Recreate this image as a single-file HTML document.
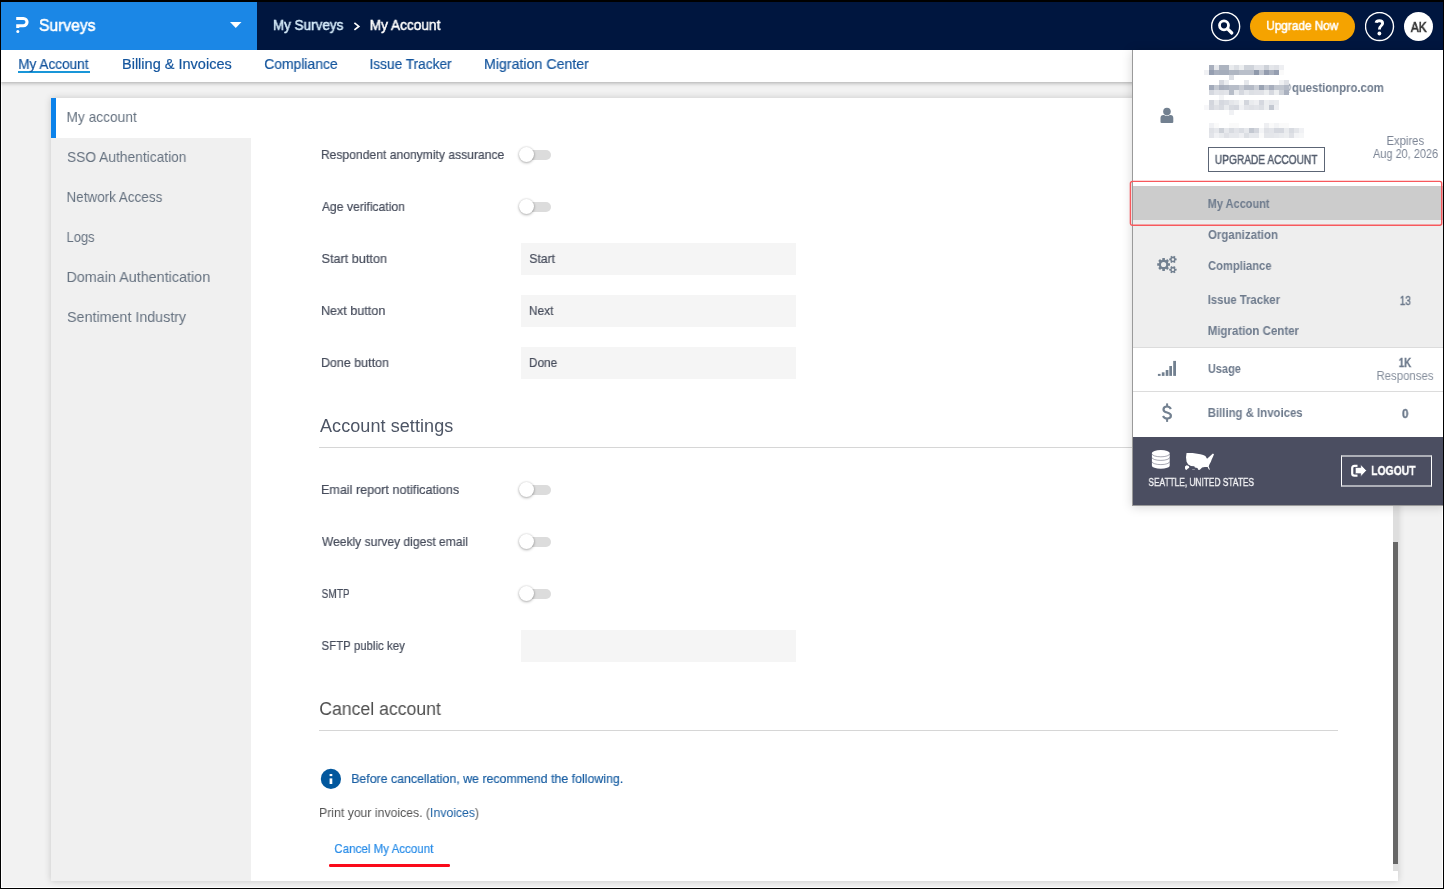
<!DOCTYPE html>
<html>
<head>
<meta charset="utf-8">
<title>My Account</title>
<style>
*{box-sizing:border-box;margin:0;padding:0}
html,body{width:1444px;height:889px;overflow:hidden;background:#f2f2f2}
body{font-family:"Liberation Sans",sans-serif;position:relative}
div,svg{position:absolute}
.t{position:absolute;white-space:nowrap;line-height:1;display:block;will-change:transform}
#card{left:51px;top:98px;width:1347px;height:783px;background:#fff;box-shadow:0 0 7px rgba(0,0,0,.18)}
#side{left:51px;top:138px;width:200px;height:743px;background:#f0f0f0}
#sideAct{left:51px;top:98px;width:5px;height:40px;background:#0b82ea}
.inp{left:521px;width:275px;height:32px;background:#f5f5f5}
.tog{left:518px;width:34px;height:16px}
.tog i{position:absolute;left:3px;top:3px;width:30px;height:10px;border-radius:5px;background:#dcdcdc}
.tog b{position:absolute;left:1px;top:0;width:15px;height:15px;border-radius:50%;background:#fff;box-shadow:0 0 2px rgba(0,0,0,.14),0 1px 3px rgba(0,0,0,.3)}
.hr{left:319px;width:1019px;height:1px;background:#d6d6d6}
#subnav{left:0;top:50px;width:1444px;height:32px;background:#fff;box-shadow:0 1px 4px rgba(0,0,0,.3)}
#hdr{left:0;top:0;width:1444px;height:50px;background:#00163f}
#hdrBlue{left:0;top:0;width:257px;height:50px;background:#1b87e6}
#dd{left:1132px;top:50px;width:313px;height:456px;background:#fff;border:1px solid #9a9a9a;border-top:0;box-shadow:0 1px 10px rgba(0,0,0,.17)}
.fr{background:#000;z-index:9}
</style>
</head>
<body>
<!-- inner white edge of screenshot frame -->
<div style="left:1px;top:50px;width:1px;height:838px;background:#fff"></div>
<div style="left:1442px;top:50px;width:1px;height:838px;background:#fff"></div>
<div style="left:1px;top:887px;width:1442px;height:1px;background:#fff"></div>
<!-- card -->
<div id="card"></div>
<div id="side"></div>
<div id="sideAct"></div>
<!-- form controls -->
<div class="tog" style="top:147px"><i></i><b></b></div>
<div class="tog" style="top:199px"><i></i><b></b></div>
<div class="inp" style="top:243px"></div>
<div class="inp" style="top:295px"></div>
<div class="inp" style="top:347px"></div>
<div class="hr" style="top:447px"></div>
<div class="tog" style="top:482px"><i></i><b></b></div>
<div class="tog" style="top:534px"><i></i><b></b></div>
<div class="tog" style="top:586px"><i></i><b></b></div>
<div class="inp" style="top:630px"></div>
<div class="hr" style="top:730px"></div>
<svg style="left:320px;top:768px" width="22" height="22" viewBox="0 0 22 22"><circle cx="10.9" cy="10.9" r="10.1" fill="#02579d"/><rect x="9.6" y="10.4" width="2.7" height="5.6" fill="#fff"/><rect x="9.6" y="6" width="2.7" height="2.1" fill="#fff"/></svg>
<div style="left:329px;top:864px;width:120.5px;height:2.6px;background:#fa0a1a;border-radius:1.3px"></div>
<!-- scrollbar -->
<div style="left:1393px;top:505px;width:5px;height:366px;background:#dedede"></div>
<div style="left:1393px;top:542px;width:5px;height:322px;background:#666"></div>
<!-- subnav + header -->
<div id="subnav"></div>
<div style="left:18px;top:71px;width:72px;height:2px;background:#1996d8"></div>
<div id="hdr"><div id="hdrBlue"></div></div>
<svg style="left:15px;top:16px" width="15" height="18" viewBox="0 0 15 18"><path d="M1.2 2.45 H8.4 A3.65 3.65 0 0 1 8.4 9.75 H2.75 V12.1" fill="none" stroke="#fff" stroke-width="3.1"/><circle cx="2.8" cy="15.5" r="1.5" fill="#fff"/></svg>
<svg style="left:230px;top:22px" width="12" height="6" viewBox="0 0 12 6"><path d="M0 0H11.5L5.75 6Z" fill="#fff"/></svg>
<svg style="left:353px;top:22px" width="8" height="9" viewBox="0 0 8 9"><path d="M1.4 0.9 L5.8 4.4 L1.4 7.9" fill="none" stroke="#fff" stroke-width="1.7"/></svg>
<svg style="left:1211px;top:12px" width="30" height="30" viewBox="0 0 30 30"><circle cx="14.65" cy="14.5" r="14" fill="none" stroke="#fff" stroke-width="1.4"/><circle cx="13" cy="13.3" r="4.5" fill="none" stroke="#fff" stroke-width="2.8"/><path d="M16.6 16.9 L20.8 21" stroke="#fff" stroke-width="3.2" stroke-linecap="round"/></svg>
<div style="left:1250px;top:12px;width:105px;height:29px;border-radius:14.5px;background:#f5a300"></div>
<svg style="left:1365px;top:12px" width="30" height="30" viewBox="0 0 30 30"><circle cx="14.5" cy="14.5" r="14" fill="none" stroke="#fff" stroke-width="1.4"/><path d="M11.1 10.8 Q11.5 8.7 14.4 8.7 Q17.6 8.7 17.6 11.3 Q17.6 13 15.9 14.1 Q14.4 15.1 14.4 17.5" fill="none" stroke="#fff" stroke-width="2.9"/><circle cx="14.4" cy="21.5" r="1.9" fill="#fff"/></svg>
<div style="left:1404px;top:12px;width:29px;height:29px;border-radius:50%;background:#fff"></div>
<!-- dropdown -->
<div id="dd"></div>
<div style="left:1133px;top:219px;width:311px;height:128px;background:#eee"></div>
<div style="left:1133px;top:186px;width:311px;height:33.5px;background:#ccc"></div>
<div style="left:1133px;top:347px;width:311px;height:1px;background:#dcdcdc"></div>
<div style="left:1133px;top:391px;width:311px;height:1px;background:#dcdcdc"></div>
<div style="left:1133px;top:437px;width:311px;height:68px;background:#4b4e61"></div>
<div style="left:1208px;top:147px;width:117px;height:25px;border:1px solid #5c6575"></div>
<div style="left:1341px;top:455px;width:91px;height:32px;border:1px solid #fff;border-top:2px solid rgba(255,255,255,.55);border-bottom:2px solid rgba(255,255,255,.55)"></div>
<span class="t" style="left:39px;top:17px;padding-left:0.04px;font-size:16.5px;color:#fff;-webkit-text-stroke:0.55px #fff;transform-origin:0 0;transform:scaleX(0.9450);">Surveys</span>
<span class="t" style="left:272px;top:18px;padding-left:1.02px;font-size:14.5px;color:#d4ebfa;-webkit-text-stroke:0.5px #d4ebfa;transform-origin:0 0;transform:scaleX(0.9292);">My Surveys</span>
<span class="t" style="left:369px;top:18px;padding-left:0.72px;font-size:14.5px;color:#fff;-webkit-text-stroke:0.5px #fff;transform-origin:0 0;transform:scaleX(0.9429);">My Account</span>
<span class="t" style="left:1266px;top:19px;padding-left:0.26px;font-size:13px;color:#fff;-webkit-text-stroke:0.55px #fff;transform-origin:0 0;transform:scaleX(0.9070);">Upgrade Now</span>
<span class="t" style="left:1410px;top:20px;padding-left:1.00px;font-size:14px;color:#333;-webkit-text-stroke:0.7px #333;transform-origin:0 0;transform:scaleX(0.8502);">AK</span>
<span class="t" style="left:18px;top:57px;padding-left:0.25px;font-size:14.5px;color:#14559d;-webkit-text-stroke:0.2px #14559d;transform-origin:0 0;transform:scaleX(0.9375);">My Account</span>
<span class="t" style="left:121px;top:57px;padding-left:0.97px;font-size:14.5px;color:#14559d;-webkit-text-stroke:0.2px #14559d;letter-spacing:0.011px;">Billing &amp; Invoices</span>
<span class="t" style="left:264px;top:57px;padding-left:0.21px;font-size:14.5px;color:#14559d;-webkit-text-stroke:0.2px #14559d;transform-origin:0 0;transform:scaleX(0.9589);">Compliance</span>
<span class="t" style="left:369px;top:57px;padding-left:0.56px;font-size:14.5px;color:#14559d;-webkit-text-stroke:0.2px #14559d;transform-origin:0 0;transform:scaleX(0.9432);">Issue Tracker</span>
<span class="t" style="left:483px;top:57px;padding-left:1.01px;font-size:14.5px;color:#14559d;-webkit-text-stroke:0.2px #14559d;transform-origin:0 0;transform:scaleX(0.9785);">Migration Center</span>
<span class="t" style="left:66px;top:109px;padding-left:0.47px;font-size:15px;color:#667280;transform-origin:0 0;transform:scaleX(0.9163);">My account</span>
<span class="t" style="left:67px;top:149px;padding-left:0.08px;font-size:15px;color:#667280;transform-origin:0 0;transform:scaleX(0.9174);">SSO Authentication</span>
<span class="t" style="left:66px;top:189px;padding-left:0.50px;font-size:15px;color:#667280;transform-origin:0 0;transform:scaleX(0.8986);">Network Access</span>
<span class="t" style="left:66px;top:229px;padding-left:0.57px;font-size:15px;color:#667280;transform-origin:0 0;transform:scaleX(0.8628);">Logs</span>
<span class="t" style="left:66px;top:269px;padding-left:0.39px;font-size:15px;color:#667280;transform-origin:0 0;transform:scaleX(0.9580);">Domain Authentication</span>
<span class="t" style="left:67px;top:309px;padding-left:0.06px;font-size:15px;color:#667280;transform-origin:0 0;transform:scaleX(0.9523);">Sentiment Industry</span>
<span class="t" style="left:320px;top:148px;padding-left:0.97px;font-size:13px;color:#474d5c;-webkit-text-stroke:0.2px #474d5c;transform-origin:0 0;transform:scaleX(0.9330);">Respondent anonymity assurance</span>
<span class="t" style="left:321px;top:200px;padding-left:0.91px;font-size:13px;color:#474d5c;-webkit-text-stroke:0.2px #474d5c;transform-origin:0 0;transform:scaleX(0.9353);">Age verification</span>
<span class="t" style="left:321px;top:252px;padding-left:0.47px;font-size:13px;color:#474d5c;-webkit-text-stroke:0.2px #474d5c;transform-origin:0 0;transform:scaleX(0.9754);">Start button</span>
<span class="t" style="left:529px;top:252px;padding-left:0.23px;font-size:13px;color:#474d5c;-webkit-text-stroke:0.2px #474d5c;transform-origin:0 0;transform:scaleX(0.9394);">Start</span>
<span class="t" style="left:320px;top:304px;padding-left:0.89px;font-size:13px;color:#474d5c;-webkit-text-stroke:0.2px #474d5c;transform-origin:0 0;transform:scaleX(0.9685);">Next button</span>
<span class="t" style="left:528px;top:304px;padding-left:1.02px;font-size:13px;color:#474d5c;-webkit-text-stroke:0.2px #474d5c;transform-origin:0 0;transform:scaleX(0.9104);">Next</span>
<span class="t" style="left:320px;top:356px;padding-left:0.91px;font-size:13px;color:#474d5c;-webkit-text-stroke:0.2px #474d5c;transform-origin:0 0;transform:scaleX(0.9618);">Done button</span>
<span class="t" style="left:528px;top:356px;padding-left:1.01px;font-size:13px;color:#474d5c;-webkit-text-stroke:0.2px #474d5c;transform-origin:0 0;transform:scaleX(0.9125);">Done</span>
<span class="t" style="left:320px;top:417px;font-size:18px;color:#4d5565;letter-spacing:0.076px;">Account settings</span>
<span class="t" style="left:320px;top:483px;padding-left:0.89px;font-size:13px;color:#474d5c;-webkit-text-stroke:0.2px #474d5c;transform-origin:0 0;transform:scaleX(0.9718);">Email report notifications</span>
<span class="t" style="left:321px;top:535px;padding-left:0.92px;font-size:13px;color:#474d5c;-webkit-text-stroke:0.2px #474d5c;transform-origin:0 0;transform:scaleX(0.9284);">Weekly survey digest email</span>
<span class="t" style="left:321px;top:587px;padding-left:0.68px;font-size:13px;color:#474d5c;-webkit-text-stroke:0.2px #474d5c;transform-origin:0 0;transform:scaleX(0.7807);">SMTP</span>
<span class="t" style="left:321px;top:639px;padding-left:0.56px;font-size:13px;color:#474d5c;-webkit-text-stroke:0.2px #474d5c;transform-origin:0 0;transform:scaleX(0.8829);">SFTP public key</span>
<span class="t" style="left:319px;top:700px;padding-left:0.18px;font-size:18px;color:#4f4f4f;transform-origin:0 0;transform:scaleX(0.9806);">Cancel account</span>
<span class="t" style="left:351px;top:772px;padding-left:0.14px;font-size:13px;color:#1a5fa3;-webkit-text-stroke:0.2px #1a5fa3;transform-origin:0 0;transform:scaleX(0.9507);">Before cancellation, we recommend the following.</span>
<span class="t" style="left:319px;top:806px;padding-left:0.05px;font-size:13px;color:#555;transform-origin:0 0;transform:scaleX(0.9423);">Print your invoices. (<span style="color:#1a5fa3">Invoices</span>)</span>
<span class="t" style="left:334px;top:842px;padding-left:0.35px;font-size:13px;color:#2a8de8;-webkit-text-stroke:0.2px #2a8de8;transform-origin:0 0;transform:scaleX(0.8903);">Cancel My Account</span>
<span class="t" style="left:1280px;top:82px;padding-left:0.61px;font-size:12px;color:#6d7a8c;font-weight:bold;transform-origin:0 0;transform:scaleX(0.9381);">@</span>
<span class="t" style="left:1291px;top:82px;padding-left:0.95px;font-size:12px;color:#6d7a8c;font-weight:bold;transform-origin:0 0;transform:scaleX(0.9446);">questionpro.com</span>
<span class="t" style="left:1214px;top:154px;padding-left:1.07px;font-size:12.5px;color:#555e6e;-webkit-text-stroke:0.5px #555e6e;transform-origin:0 0;transform:scaleX(0.8121);">UPGRADE ACCOUNT</span>
<span class="t" style="left:1386px;top:135px;padding-left:0.39px;font-size:12px;color:#7b8494;transform-origin:0 0;transform:scaleX(0.9405);">Expires</span>
<span class="t" style="left:1373px;top:148px;font-size:12px;color:#7b8494;transform-origin:0 0;transform:scaleX(0.9117);">Aug 20, 2026</span>
<span class="t" style="left:1207px;top:198px;padding-left:0.78px;font-size:12px;color:#6d7a8c;font-weight:bold;transform-origin:0 0;transform:scaleX(0.9152);">My Account</span>
<span class="t" style="left:1208px;top:229px;padding-left:0.04px;font-size:12px;color:#6d7a8c;font-weight:bold;transform-origin:0 0;transform:scaleX(0.9533);">Organization</span>
<span class="t" style="left:1208px;top:260px;padding-left:0.05px;font-size:12px;color:#6d7a8c;font-weight:bold;transform-origin:0 0;transform:scaleX(0.9318);">Compliance</span>
<span class="t" style="left:1207px;top:294px;padding-left:0.73px;font-size:12px;color:#6d7a8c;font-weight:bold;transform-origin:0 0;transform:scaleX(0.9432);">Issue Tracker</span>
<span class="t" style="left:1399px;top:295px;padding-left:1.09px;font-size:12px;color:#6d7a8c;-webkit-text-stroke:0.5px #6d7a8c;transform-origin:0 0;transform:scaleX(0.8174);">13</span>
<span class="t" style="left:1207px;top:325px;padding-left:0.71px;font-size:12px;color:#6d7a8c;font-weight:bold;transform-origin:0 0;transform:scaleX(0.9585);">Migration Center</span>
<span class="t" style="left:1207px;top:363px;padding-left:0.96px;font-size:12px;color:#6d7a8c;font-weight:bold;transform-origin:0 0;transform:scaleX(0.9173);">Usage</span>
<span class="t" style="left:1398px;top:357px;padding-left:1.01px;font-size:12px;color:#6d7a8c;font-weight:bold;-webkit-text-stroke:0.3px #6d7a8c;transform-origin:0 0;transform:scaleX(0.7973);">1K</span>
<span class="t" style="left:1376px;top:370px;padding-left:0.38px;font-size:12px;color:#858e9c;transform-origin:0 0;transform:scaleX(0.9519);">Responses</span>
<span class="t" style="left:1207px;top:407px;padding-left:0.73px;font-size:12px;color:#6d7a8c;font-weight:bold;transform-origin:0 0;transform:scaleX(0.9490);">Billing &amp; Invoices</span>
<span class="t" style="left:1402px;top:408px;padding-left:0.04px;font-size:12px;color:#6d7a8c;font-weight:bold;-webkit-text-stroke:0.3px #6d7a8c;transform-origin:0 0;transform:scaleX(0.9634);">0</span>
<span class="t" style="left:1148px;top:476px;padding-left:0.61px;font-size:11.6px;color:#f0f0f3;-webkit-text-stroke:0.4px #f0f0f3;transform-origin:0 0;transform:scaleX(0.7187);">SEATTLE, UNITED STATES</span>
<span class="t" style="left:1371px;top:464px;padding-left:0.32px;font-size:13px;color:#fff;font-weight:bold;-webkit-text-stroke:0.4px #fff;transform-origin:0 0;transform:scaleX(0.7969);">LOGOUT</span>
<!-- pixelated (redacted) identity text -->
<div style="left:1209px;top:65px;width:75px;height:5px;background:linear-gradient(90deg,#a8afbd 0 5px,#e6e8ec 0 10px,#adb4c0 0 15px,#adb4c0 0 20px,#e9ebee 0 25px,#dcdfe4 0 30px,#eceef0 0 35px,#cfd3da 0 40px,#cfd3da 0 45px,#e2e4e9 0 50px,#e2e4e9 0 55px,#cdd1d8 0 60px,#e4e6ea 0 65px,#dfe1e6 0 70px,#eeeff2 0 75px)"></div>
<div style="left:1204px;top:70px;width:80px;height:5px;background:linear-gradient(90deg,#f0f1f4 0 5px,#959eb0 0 10px,#a9b0be 0 15px,#a5adbb 0 20px,#a5adbb 0 25px,#b0b7c3 0 30px,#afb6c2 0 35px,#b9bfca 0 40px,#b9bfca 0 45px,#b9bfca 0 50px,#8f99ab 0 55px,#c0c5cf 0 60px,#939cae 0 65px,#a9b0be 0 70px,#959eb0 0 75px,#fafafa 0 80px)"></div>
<div style="left:1229px;top:75px;width:5px;height:5px;background:#dcdfe5"></div>
<div style="left:1219px;top:80px;width:30px;height:5px;background:linear-gradient(90deg,#d5d8df 0 5px,#eceef1 0 10px,#ffffff 0 15px,#ffffff 0 20px,#ffffff 0 25px,#e6e8ec 0 30px)"></div>
<div style="left:1279px;top:80px;width:10px;height:5px;background:linear-gradient(90deg,#f0f1f3 0 5px,#dfe1e6 0 10px)"></div>
<div style="left:1209px;top:85px;width:80px;height:5px;background:linear-gradient(90deg,#a2aaba 0 5px,#c3c8d1 0 10px,#a9b0be 0 15px,#adb4c1 0 20px,#b7bdc8 0 25px,#b7bdc8 0 30px,#c9cdd5 0 35px,#b4bac6 0 40px,#b4bac6 0 45px,#cbcfd7 0 50px,#9aa3b3 0 55px,#bfc4ce 0 60px,#a7aebd 0 65px,#c1c6cf 0 70px,#c1c6cf 0 75px,#b5bbc7 0 80px)"></div>
<div style="left:1209px;top:90px;width:80px;height:5px;background:linear-gradient(90deg,#d5d8df 0 5px,#e2e4e9 0 10px,#dfe1e6 0 15px,#e2e4e9 0 20px,#b7bdc8 0 25px,#e9ebee 0 30px,#d5d8df 0 35px,#e6e8ec 0 40px,#dcdfe4 0 45px,#dfe1e6 0 50px,#dfe1e6 0 55px,#eceef0 0 60px,#d5d8df 0 65px,#eceef0 0 70px,#cdd1d8 0 75px,#aab1bf 0 80px)"></div>
<div style="left:1219px;top:95px;width:5px;height:5px;background:#f3f4f6"></div>
<div style="left:1209px;top:100px;width:70px;height:5px;background:linear-gradient(90deg,#d3d6dd 0 5px,#e9ebee 0 10px,#d5d8df 0 15px,#dadde3 0 20px,#e4e6ea 0 25px,#e9ebee 0 30px,#f5f6f7 0 35px,#d3d6dd 0 40px,#e9ebee 0 45px,#eeeff2 0 50px,#d5d8df 0 55px,#eceef0 0 60px,#e6e8ec 0 65px,#e9ebee 0 70px)"></div>
<div style="left:1204px;top:105px;width:75px;height:5px;background:linear-gradient(90deg,#f7f7f9 0 5px,#d5d8df 0 10px,#dfe1e6 0 15px,#d8dbe1 0 20px,#e9ebee 0 25px,#d8dbe1 0 30px,#d5d8df 0 35px,#f0f1f4 0 40px,#e2e4e9 0 45px,#dfe1e6 0 50px,#e2e4e9 0 55px,#dcdfe4 0 60px,#eceef0 0 65px,#c3c8d1 0 70px,#eeeff2 0 75px)"></div>
<div style="left:1229px;top:110px;width:5px;height:5px;background:#f0f1f4"></div>
<div style="left:1209px;top:123px;width:80px;height:5px;background:linear-gradient(90deg,#f0f1f4 0 5px,#fafafa 0 10px,#ffffff 0 15px,#ffffff 0 20px,#fafafa 0 25px,#fafafa 0 30px,#ffffff 0 35px,#ffffff 0 40px,#ffffff 0 45px,#ffffff 0 50px,#ffffff 0 55px,#eeeff2 0 60px,#fafafa 0 65px,#f3f4f6 0 70px,#fafafa 0 75px,#fafafa 0 80px)"></div>
<div style="left:1209px;top:128px;width:95px;height:5px;background:linear-gradient(90deg,#dfe1e6 0 5px,#e6e8ec 0 10px,#cdd1d8 0 15px,#e6e8ec 0 20px,#d8dbe1 0 25px,#e2e4e9 0 30px,#dadde3 0 35px,#e6e8ec 0 40px,#c3c8d1 0 45px,#d3d6dd 0 50px,#f3f4f6 0 55px,#dfe1e6 0 60px,#e2e4e9 0 65px,#d5d8df 0 70px,#d5d8df 0 75px,#e9ebee 0 80px,#d8dbe1 0 85px,#e4e6ea 0 90px,#f0f1f4 0 95px)"></div>
<div style="left:1209px;top:133px;width:95px;height:5px;background:linear-gradient(90deg,#e2e4e9 0 5px,#f0f1f4 0 10px,#e9ebee 0 15px,#dfe1e6 0 20px,#e6e8ec 0 25px,#e6e8ec 0 30px,#eeeff2 0 35px,#dcdfe4 0 40px,#e6e8ec 0 45px,#e6e8ec 0 50px,#fafafa 0 55px,#e4e6ea 0 60px,#e4e6ea 0 65px,#e6e8ec 0 70px,#e9ebee 0 75px,#eceef0 0 80px,#dfe1e6 0 85px,#f3f4f6 0 90px,#f5f6f7 0 95px)"></div>
<!-- dropdown icons -->
<svg style="left:1160px;top:107px" width="14" height="17" viewBox="0 0 14 17"><path d="M0.5 15 V11 Q0.5 8.1 3.4 8.1 H10.4 Q13.3 8.1 13.3 11 V15 Q13.3 16 12.2 16 H1.6 Q0.5 16 0.5 15Z" fill="#728090"/><circle cx="6.95" cy="4.6" r="4.5" fill="#fff"/><circle cx="6.95" cy="4.6" r="3.8" fill="#728090"/></svg>
<svg style="left:1157px;top:255px" width="21" height="19" viewBox="0 0 21 19"><path fill-rule="evenodd" fill="#728090" d="M11.32 8.17 L12.98 8.23 L12.98 10.77 L11.32 10.83 L10.88 11.89 L12.00 13.11 L10.21 14.90 L8.99 13.78 L7.93 14.22 L7.87 15.88 L5.33 15.88 L5.27 14.22 L4.21 13.78 L2.99 14.90 L1.20 13.11 L2.32 11.89 L1.88 10.83 L0.22 10.77 L0.22 8.23 L1.88 8.17 L2.32 7.11 L1.20 5.89 L2.99 4.10 L4.21 5.22 L5.27 4.78 L5.33 3.12 L7.87 3.12 L7.93 4.78 L8.99 5.22 L10.21 4.10 L12.00 5.89 L10.88 7.11Z M4.00 9.50 a2.60 2.60 0 1 0 5.20 0 a2.60 2.60 0 1 0 -5.20 0Z M18.28 3.34 L19.60 3.53 L19.60 5.27 L18.28 5.46 L18.00 5.93 L18.50 7.17 L17.00 8.04 L16.17 6.99 L15.63 6.99 L14.80 8.04 L13.30 7.17 L13.80 5.93 L13.52 5.46 L12.20 5.27 L12.20 3.53 L13.52 3.34 L13.80 2.87 L13.30 1.63 L14.80 0.76 L15.63 1.81 L16.17 1.81 L17.00 0.76 L18.50 1.63 L18.00 2.87Z M14.65 4.40 a1.25 1.25 0 1 0 2.50 0 a1.25 1.25 0 1 0 -2.50 0Z M18.28 13.64 L19.60 13.83 L19.60 15.57 L18.28 15.76 L18.00 16.23 L18.50 17.47 L17.00 18.34 L16.17 17.29 L15.63 17.29 L14.80 18.34 L13.30 17.47 L13.80 16.23 L13.52 15.76 L12.20 15.57 L12.20 13.83 L13.52 13.64 L13.80 13.17 L13.30 11.93 L14.80 11.06 L15.63 12.11 L16.17 12.11 L17.00 11.06 L18.50 11.93 L18.00 13.17Z M14.65 14.70 a1.25 1.25 0 1 0 2.50 0 a1.25 1.25 0 1 0 -2.50 0Z"/></svg>
<svg style="left:1157px;top:360px" width="20" height="16" viewBox="0 0 20 16"><g fill="#728090"><rect x=".9" y="13.9" width="2.7" height="2"/><rect x="4.8" y="12.3" width="2.7" height="3.6"/><rect x="8.7" y="10" width="2.7" height="5.9"/><rect x="12.3" y="6" width="2.7" height="9.9"/><rect x="16.2" y=".9" width="2.8" height="15"/></g></svg>
<svg style="left:1161px;top:403px" width="12" height="20" viewBox="0 0 12 20"><path d="M9.9 6 Q8.6 3.5 6.1 3.5 Q2.5 3.5 2.5 6.4 Q2.5 8.6 6.1 9.5 Q9.9 10.4 9.9 12.8 Q9.9 15.5 6.1 15.5 Q3.2 15.5 2 13" fill="none" stroke="#728090" stroke-width="2.2"/><rect x="5.1" y=".4" width="2" height="3.4" fill="#728090"/><rect x="5.1" y="15.2" width="2" height="3.7" fill="#728090"/></svg>
<svg style="left:1151px;top:449px" width="20" height="21" viewBox="0 0 20 21"><path d="M0.9 4 A8.9 3 0 0 1 18.7 4 V16.7 A8.9 3 0 0 1 0.9 16.7 Z" fill="#fff"/><g fill="none" stroke="#4b4e61" stroke-opacity=".55" stroke-width=".9"><path d="M0.9 4.8 A8.9 3 0 0 0 18.7 4.8"/><path d="M0.9 8.4 A8.9 3 0 0 0 18.7 8.4"/><path d="M0.9 12.6 A8.9 3 0 0 0 18.7 12.6"/></g></svg>
<svg style="left:1185px;top:452px" width="30" height="19" viewBox="0 0 30 19"><g fill="#fff"><path d="M1.55 1.1 L7.6 1.1 L15.4 2.2 L18.2 3 L20.4 3.9 L22.05 6.7 L24.3 4.7 L26.5 2.8 L27.9 1.4 L29 2.2 L27.9 5 L26.8 7.2 L25.9 9.7 L24.5 12.2 L23.7 14.4 L24.5 16.4 L24.8 17.9 L23.7 17.2 L22.6 15 L19.8 15 L17.1 15.5 L14.85 17.8 L13.5 18 L12.4 16.1 L9.9 15.5 L9.3 14.2 L6 13.9 L3.2 12.5 L1.55 9.7 L1 5.3Z"/><path d="M-.1 14.7 L1.55 13.3 L3.8 13.9 L4.3 15.8 L2.7 16.65 L1.55 18 L.17 17.2Z"/><rect x="7.2" y="17.2" width="2.6" height=".7" opacity=".5"/></g></svg>
<svg style="left:1351px;top:464px" width="16" height="14" viewBox="0 0 16 14"><path d="M6.5 1.9 H3.4 Q1.2 1.9 1.2 4.1 V9.4 Q1.2 11.6 3.4 11.6 H6.5" fill="none" stroke="#fff" stroke-width="2.2"/><path d="M4.3 3.4 H9.7 V0.4 L15.5 6.55 L9.7 12.7 V9.7 H4.3Z" fill="#fff" stroke="#4b4e61" stroke-width=".7"/></svg>
<!-- red highlight -->
<svg style="left:1129px;top:180px" width="314" height="47" viewBox="0 0 314 47"><rect x="1.4" y="1.4" width="311.3" height="43.9" rx="2" fill="none" stroke="#f7585c" stroke-width="1.4"/></svg>
<!-- screenshot frame -->
<div class="fr" style="left:0;top:0;width:1444px;height:2px"></div>
<div class="fr" style="left:0;top:0;width:1px;height:889px"></div>
<div class="fr" style="left:1443px;top:0;width:1px;height:889px"></div>
<div class="fr" style="left:0;top:888px;width:1444px;height:1px"></div>
</body>
</html>
